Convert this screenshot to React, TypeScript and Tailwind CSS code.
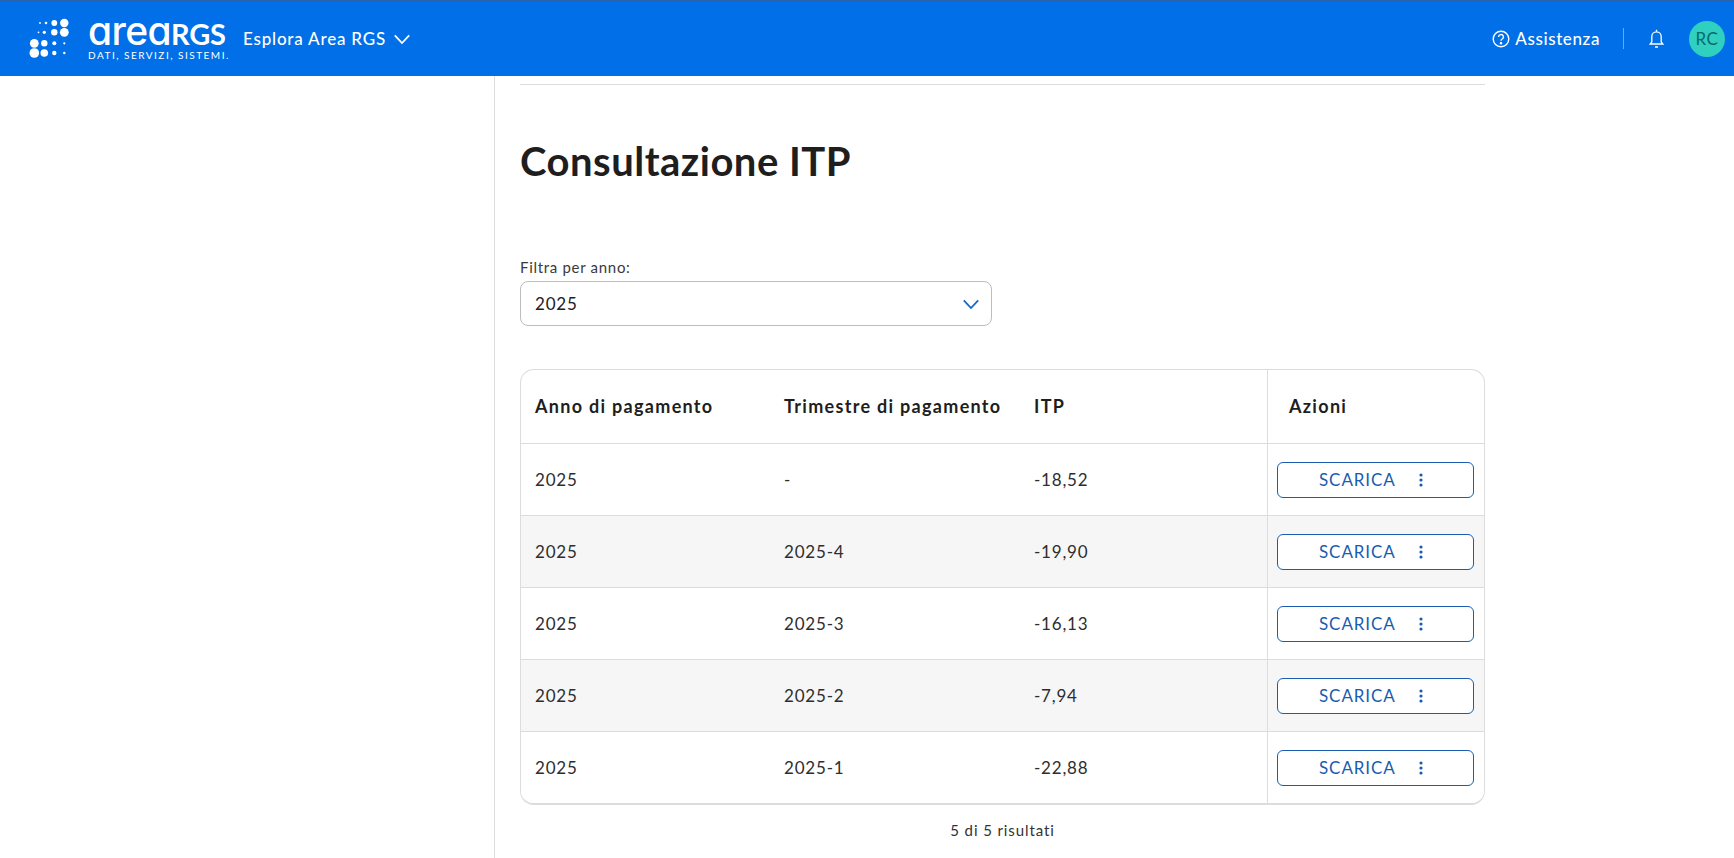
import React from "react";

const logoDots: [number, number, number][] = [
  [11, 5, 0.9], [17, 5, 1.3], [25.3, 5, 2.9], [35.3, 5, 4.2],
  [9.5, 14.3, 0.9], [15.3, 14.3, 1.6], [25.3, 14.3, 3.2], [35.3, 14.3, 4.4],
  [5.3, 25.3, 4.4], [15.3, 25.3, 3.2], [25.3, 25.3, 2], [35.3, 25.3, 1.1],
  [5.3, 35, 4.8], [15.3, 35, 3.8], [25.3, 35, 2.2], [35.3, 35, 1.2],
];

function LogoDots() {
  return (
    <svg width="41" height="41" viewBox="0 0 41 41" fill="#fff" className="shrink-0">
      {logoDots.map(([x, y, r], i) => (
        <circle key={i} cx={x} cy={y} r={r} />
      ))}
    </svg>
  );
}

const rows = [
  ["2025", "-", "-18,52"],
  ["2025", "2025-4", "-19,90"],
  ["2025", "2025-3", "-16,13"],
  ["2025", "2025-2", "-7,94"],
  ["2025", "2025-1", "-22,88"],
];

function Chevron({ className, size }: { className: string; size: number }) {
  return (
    <svg width={size} height={size * 0.6} viewBox="0 0 20 12" fill="none" stroke="currentColor" strokeWidth="2" className={className}>
      <path d="M2 1.5 L10 10 L18 1.5" />
    </svg>
  );
}

export default function App() {
  return (
    <div className="h-[858px] w-[1734px] overflow-hidden bg-white text-[#212121] font-['Lato','Noto_Sans',sans-serif]">
      <header className="flex h-[76px] items-center bg-[#006fe8] border-t border-t-[#2a63ad] pl-[29px] pr-[9px] text-white">
        <LogoDots />
        <div className="ml-[18px] flex w-[132px] flex-col">
          <div className="flex h-[30px] items-baseline leading-[30px]">
            <span className="font-['Inter',sans-serif] text-[39px] font-medium tracking-[-0.6px] [font-feature-settings:'cv11']">area</span>
            <span className="text-[29px] font-bold tracking-[-0.2px]">RGS</span>
          </div>
          <span className="mt-[3px] whitespace-nowrap text-[10px] leading-[12px] tracking-[1.5px]">DATI, SERVIZI, SISTEMI.</span>
        </div>
        <div className="ml-[23px] flex items-center gap-[7px] text-[17px] font-medium tracking-[0.8px]">
          <span>Esplora Area RGS</span>
          <Chevron className="mt-[2px] text-white" size={18} />
        </div>
        <div className="ml-auto flex items-center">
          <svg width="18" height="18" viewBox="0 0 18 18" fill="none" stroke="currentColor" strokeWidth="1.4">
            <circle cx="9" cy="9" r="7.8" />
            <path d="M6.6 7 a2.4 2.4 0 1 1 3.6 2 c-.8.5-1.2 1-1.2 1.8" />
            <circle cx="9" cy="13.2" r=".6" fill="currentColor" />
          </svg>
          <span className="ml-[5px] text-[17px] font-medium tracking-[0.6px]">Assistenza</span>
          <div className="ml-[23px] h-[21px] w-px bg-[#6aaaf0]" />
          <svg className="ml-[25px]" width="15" height="19" viewBox="0 0 15 19" fill="none" stroke="currentColor" strokeWidth="1.3">
            <path d="M1.2 15 h12.6 l-1.6 -2 V7.5 a4.7 4.7 0 0 0 -9.4 0 V13 Z" />
            <path d="M7.5 .8 v2 M6 18 h3" />
          </svg>
          <div className="ml-[25px] flex h-[36px] w-[36px] items-center justify-center rounded-full bg-[#2fd0c0] text-[17px] tracking-[0.5px] text-[#0a6a6a]">RC</div>
        </div>
      </header>
      <div className="flex h-[782px]">
        <aside className="w-[495px] shrink-0 border-r border-r-[#dcdcdc]" />
        <main className="ml-[25px] w-[965px]">
          <div className="mt-[8px] h-px bg-[#dcdcdc]" />
          <h1 className="mt-[52px] text-[40px] font-bold leading-[48px] tracking-[0.5px] text-[#1e1e1e]">Consultazione ITP</h1>
          <label className="mt-[73px] block text-[15px] leading-[18px] tracking-[0.7px] text-[#3a3a3a]">Filtra per anno:</label>
          <div className="mt-[5px] flex h-[45px] w-[472px] items-center justify-between rounded-[8px] border border-[#bdbdbd] pl-[14px] pr-[11px] text-[17px] tracking-[0.8px]">
            <span>2025</span>
            <Chevron className="mt-[2px] text-[#1467c8]" size={18} />
          </div>
          <div className="mt-[43px] w-[965px] overflow-hidden rounded-[14px] border border-b-2 border-[#dcdcdc]">
            <div className="flex h-[73px] items-center text-[18px] font-bold tracking-[1.3px] text-[#1e1e1e]">
              <span className="w-[263px] shrink-0 pl-[14px]">Anno di pagamento</span>
              <span className="w-[250px] shrink-0 whitespace-nowrap">Trimestre di pagamento</span>
              <span className="w-[233px] shrink-0">ITP</span>
              <span className="flex h-full flex-1 items-center border-l border-l-[#dcdcdc] pl-[21px]">Azioni</span>
            </div>
            {rows.map((r, i) => (
              <div key={i} className={`flex h-[72px] items-center border-t border-t-[#dcdcdc] text-[17px] tracking-[0.8px] text-[#2e2e2e] ${i % 2 === 1 ? "bg-[#f6f6f6]" : "bg-white"}`}>
                <span className="w-[263px] shrink-0 pl-[14px]">{r[0]}</span>
                <span className="w-[250px] shrink-0">{r[1]}</span>
                <span className="w-[233px] shrink-0">{r[2]}</span>
                <div className="flex h-full flex-1 items-center border-l border-l-[#dcdcdc] pl-[9px]">
                  <button className="flex h-[36px] w-[197px] items-center rounded-[6px] border border-[#1a5cb0] bg-white pl-[41px] text-[17px] tracking-[0.9px] text-[#1a5cb0]">
                    <span>SCARICA</span>
                    <svg className="ml-[23px]" width="4" height="14" viewBox="0 0 4 14" fill="currentColor">
                      <circle cx="2" cy="2" r="1.6" />
                      <circle cx="2" cy="7" r="1.6" />
                      <circle cx="2" cy="12" r="1.6" />
                    </svg>
                  </button>
                </div>
              </div>
            ))}
          </div>
          <p className="mt-[16px] text-center text-[15px] leading-[18px] tracking-[0.9px] text-[#333]">5 di 5 risultati</p>
        </main>
      </div>
    </div>
  );
}
